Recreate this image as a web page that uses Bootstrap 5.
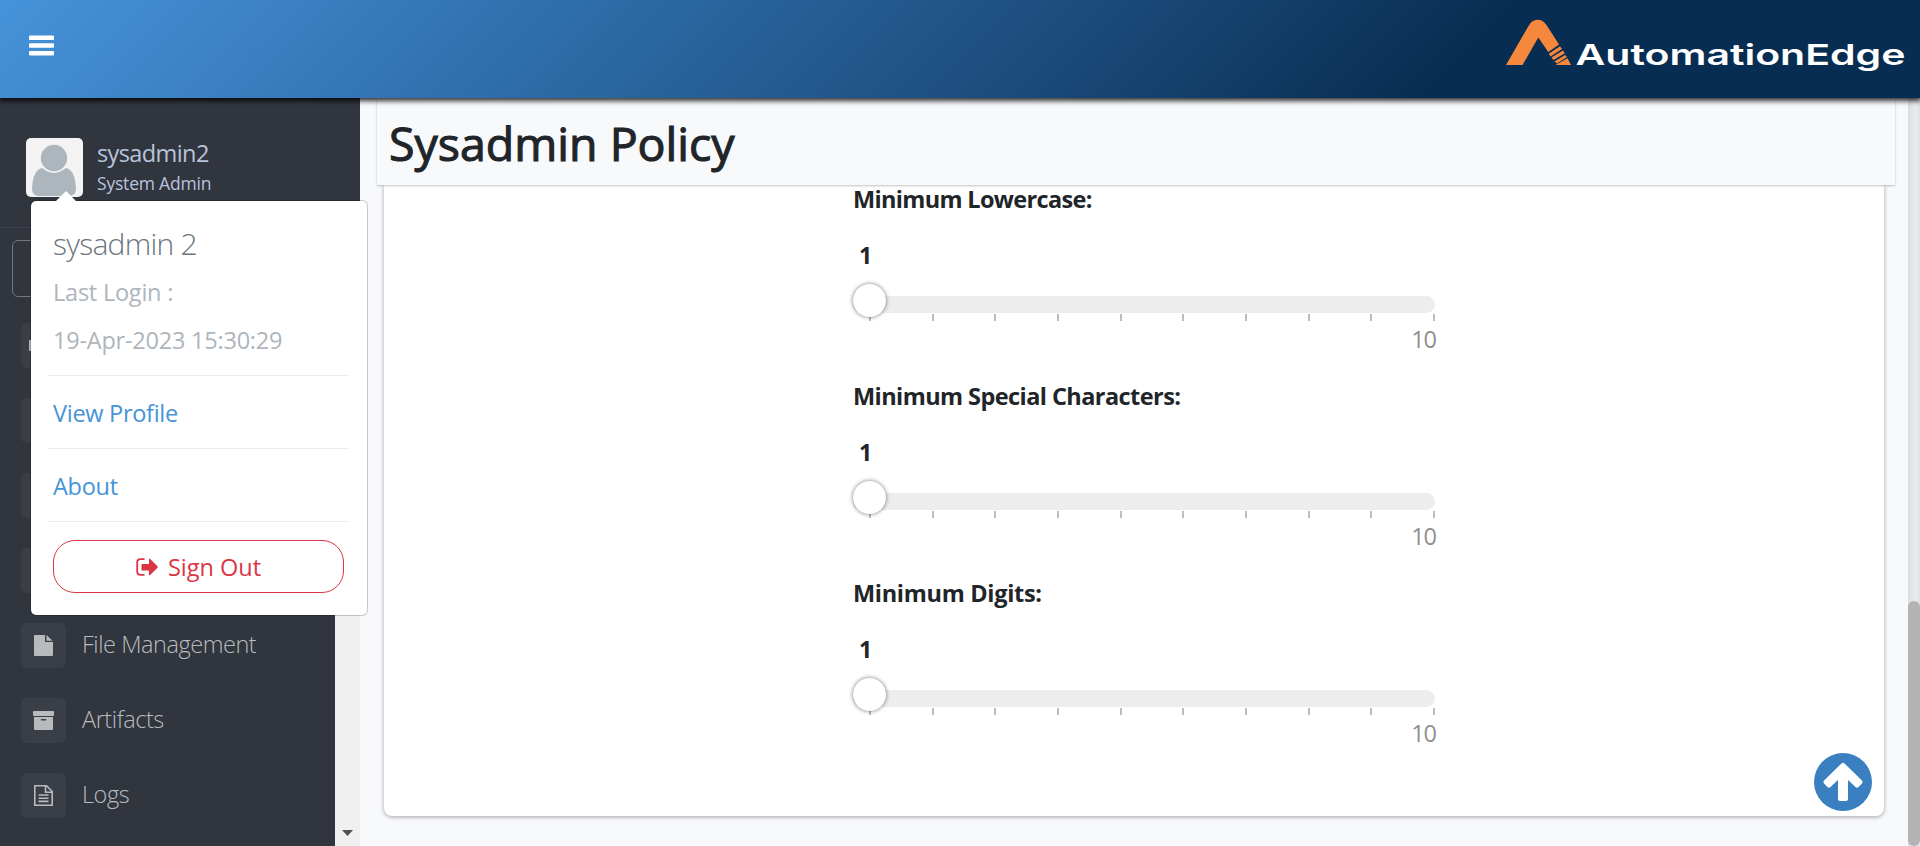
<!DOCTYPE html>
<html lang="en">
<head>
<meta charset="utf-8">
<meta name="viewport" content="width=device-width, initial-scale=1">
<title>Sysadmin Policy - AutomationEdge</title>
<link rel="stylesheet" href="https://cdn.jsdelivr.net/npm/bootstrap@5.3.0/dist/css/bootstrap.min.css">
<style>
  body { font-family: "Open Sans", "Noto Sans", sans-serif; font-size: 23.5px; line-height: 24px; height: 846px; background: #f8f9fb; color: #212529; }
  svg { display: block; flex: none; }

  .topbar { height: 98px; padding: 0 13px 8px 29px; z-index: 20; background: linear-gradient(135deg, #4593d9 0%, #3b80c2 15%, #2f70ae 27%, #23588c 45%, #164471 60%, #082d52 75%, #082d52 100%); box-shadow: 0 2px 5px 1px rgba(0,0,0,.8); }

  .side { width: 360px; background: #31353e; flex: none; z-index: 5; }
  .user-box { height: 130px; padding: 40px 0 0 26px; gap: 14px; border-bottom: 1px solid #3c414c; color: #b8c4dc; }
  .avatar { width: 57px; height: 59px; border-radius: 5px; background: #f3f3f3; }
  .user-name { letter-spacing: -.6px; margin-top: 3px; }
  .user-role { font-size: 17.5px; letter-spacing: -.2px; margin-top: 8px; line-height: 20px; }
  .search-box { height: 57px; margin: 12px 20px 26px 12px; border: 1px solid #72767d; border-radius: 6px; flex: none; }
  .menu-row { height: 45px; margin: 0 0 30px 21px; gap: 16px; flex: none; font-weight: 300; color: #b8bbbf; letter-spacing: -.45px; }
  .menu-icon { width: 45px; height: 45px; border-radius: 6px; background: #3a3e47; color: #b8babd; }
  .menu-row .txt { margin-top: -3px; }
  .side-scroll { width: 25px; background: #f0f0f0; top: 129px; bottom: 0; right: 0; }
  .side-scroll svg { margin-bottom: 10px; }

  .user-pop { left: 30px; top: 102px; width: 338px; height: 416px; padding: 25px 17px 0 17px; background: #fff; border: 1px solid rgba(0,0,0,.2); border-radius: 6px; background-clip: padding-box; z-index: 10; }
  .user-pop .tip { left: 25px; top: -10px; }
  .pop-line { padding-left: 5px; white-space: nowrap; }
  .pop-name { font-weight: 300; font-size: 30px; letter-spacing: -.75px; line-height: 36px; color: #6c757d; }
  .pop-grey { color: #adb5bd; margin-top: 24px; letter-spacing: -.22px; }
  .pop-name + .pop-grey { margin-top: 18px; }
  .pop-rule { height: 1px; margin-right: 1px; background: #e9ecef; }
  .pop-grey + .pop-rule { margin-top: 23px; }
  .pop-item { padding-top: 25px; padding-bottom: 23px; }
  .pop-link { color: #4593d8; text-decoration: none; letter-spacing: -.28px; }
  .sign-out { height: 53px; border-radius: 22px; margin: 18px 6px 0 5px; font-size: 23.5px; line-height: 24px; gap: 10px; padding: 0; }

  .scroll-bar { width: 12px; background: linear-gradient(90deg, #dcdde0, #eaebee 60%, #e0e1e4); }
  .scroll-thumb { height: 245px; border-radius: 6px; background: #b3b3b3; }
  .page-head { margin: 0 13px 0 17px; height: 87px; padding: 22px 0 0 12px; background: #f8f9fb; box-shadow: 0 1px 2px rgba(40,50,70,.3); z-index: 2; flex: none; }
  .page-head h1 { font-size: 46.5px; font-weight: 400; -webkit-text-stroke: 1.1px currentColor; letter-spacing: 0; line-height: 47px; margin: 0; }
  .policy { margin: 0 24px 30px 24px; border-radius: 0 0 8px 8px; background: #fff; box-shadow: 0 1px 4px rgba(0,0,0,.35); padding: 2px 0 0 469px; }

  .range-item { width: 582px; height: 197px; }
  .range-item label { font-weight: 700; white-space: nowrap; display: block; }
  .l1 { letter-spacing: -.66px; } .l2 { letter-spacing: -.57px; } .l3 { letter-spacing: -.3px; }
  .range-val { font-weight: 700; font-size: 23px; padding-left: 6px; margin-top: 32px; }
  .range-track { height: 17px; margin: 29px 0 1px; border-radius: 9px; background: #ededed; }
  .range-knob { width: 33px; height: 33px; left: 0; top: -12px; border-radius: 50%; background: #fff; box-shadow: 0 0 4px rgba(0,0,0,.55); }
  .range-ticks { padding: 0 0 0 16px; }
  .range-ticks i { width: 2px; height: 7px; background: #bdbdbd; }
  .range-max { color: #8f8f8f; margin-top: 6px; letter-spacing: -1px; margin-right: -1px; }
  .to-top { right: 36px; bottom: 35px; z-index: 3; }
</style>
</head>
<body class="d-flex flex-column overflow-hidden">

<header class="topbar d-flex align-items-center position-relative flex-shrink-0">
  <svg width="25" height="21" viewBox="0 0 25 21" fill="#fff"><rect y=".5" width="25" height="4.5" rx="1"/><rect y="8.3" width="25" height="4.5" rx="1"/><rect y="16" width="25" height="4.5" rx="1"/></svg>
  <svg class="ms-auto" width="401" height="60" viewBox="1506 15 401 60">
    <g fill="#f6883d">
      <path d="M1506 65L1528.500 26Q1532 19.700 1537.500 19.700Q1543 19.700 1546.500 25L1559 44.600L1548.300 52L1538.300 37.500L1522.500 65Z"/>
      <path d="M1560 46.300L1562 49L1550.500 56.500L1548.800 53.700Z"/>
      <path d="M1563 50.500L1564.800 53.300L1553.500 60L1551.500 57.500Z"/>
      <path d="M1565.200 55L1567 57L1557 63.500L1554.500 61.600Z"/>
      <path d="M1567.500 58.300L1571 65H1555.500Z"/>
    </g>
    <text x="1575.500" y="64.700" textLength="330" lengthAdjust="spacingAndGlyphs" font-family="Inter, sans-serif" font-weight="600" font-size="29" fill="#fff">AutomationEdge</text>
  </svg>
</header>

<div class="d-flex flex-grow-1 position-relative" style="min-height:0">
  <nav class="side d-flex flex-column position-relative overflow-hidden">
    <div class="user-box d-flex align-items-start flex-shrink-0">
      <div class="avatar flex-shrink-0">
        <svg width="57" height="59" viewBox="0 0 57 59"><path d="M16 30Q28 38 40 30Q49 32 50 50Q50 58 43 58H13Q6 58 6 50Q7 32 16 30Z" fill="#adb5bd"/><circle cx="28" cy="20" r="15" fill="#f3f3f3"/><circle cx="28" cy="20" r="13.200" fill="#adb5bd"/></svg>
      </div>
      <div>
        <div class="user-name">sysadmin2</div>
        <div class="user-role">System Admin</div>
      </div>
    </div>
    <div class="search-box"></div>
    <div class="menu-row d-flex"><span class="menu-icon d-flex align-items-center"><svg width="45" height="22" viewBox="0 0 45 22"><rect x="8" y="5" width="26" height="11" rx="1" fill="currentColor"/></svg></span></div>
    <div class="menu-row d-flex"><span class="menu-icon"></span></div>
    <div class="menu-row d-flex"><span class="menu-icon"></span></div>
    <div class="menu-row d-flex"><span class="menu-icon"></span></div>
    <div class="menu-row d-flex align-items-center">
      <span class="menu-icon d-flex align-items-center justify-content-center"><svg width="19" height="21" viewBox="0 0 19 21" fill="currentColor"><path d="M1 0H11V7H19V20Q19 21 18 21H1Q0 21 0 20V1Q0 0 1 0Z"/><path d="M12.500 0L18.500 5.800H12.500Z"/></svg></span>
      <span class="txt">File Management</span>
    </div>
    <div class="menu-row d-flex align-items-center">
      <span class="menu-icon d-flex align-items-center justify-content-center"><svg width="21" height="19" viewBox="0 0 21 19" fill="currentColor"><rect width="21" height="5" rx="1"/><path fill-rule="evenodd" d="M1 6H20V18Q20 19 19 19H2Q1 19 1 18ZM8.500 8A.8.8 0 0 0 8.500 9.600H12.500A.8.8 0 0 0 12.500 8Z"/></svg></span>
      <span class="txt">Artifacts</span>
    </div>
    <div class="menu-row d-flex align-items-center">
      <span class="menu-icon d-flex align-items-center justify-content-center"><svg width="19" height="21" viewBox="0 0 19 21" fill="none" stroke="currentColor" stroke-width="1.600"><path d="M.8 .8H12.500L18.200 6.500V20.200H.8Z M11.500 .8V7.300H18.200"/><path d="M4.500 10H14.500M4.500 13.200H14.500M4.500 16.400H14.500"/></svg></span>
      <span class="txt">Logs</span>
    </div>
    <div class="side-scroll position-absolute d-flex align-items-end justify-content-center"><svg width="11" height="6" viewBox="0 0 11 6"><path d="M0 0H11L5.500 6Z" fill="#505050"/></svg></div>
  </nav>

  <div class="user-pop position-absolute">
    <svg class="tip position-absolute" width="20" height="10" viewBox="0 0 20 10"><path d="M0 10L10 0L20 10Z" fill="#fff"/></svg>
    <div class="pop-line pop-name">sysadmin 2</div>
    <div class="pop-line pop-grey">Last Login :</div>
    <div class="pop-line pop-grey">19-Apr-2023 15:30:29</div>
    <div class="pop-rule"></div>
    <div class="pop-line pop-item"><a class="pop-link" href="#">View Profile</a></div>
    <div class="pop-rule"></div>
    <div class="pop-line pop-item"><a class="pop-link" href="#">About</a></div>
    <div class="pop-rule"></div>
    <div class="d-grid"><button class="sign-out btn btn-outline-danger d-flex align-items-center justify-content-center" type="button">
      <svg width="22" height="18" viewBox="0 0 22 18"><path d="M8.500 1.200H4.500Q1.200 1.200 1.200 4.500V13.500Q1.200 16.800 4.500 16.800H8.500" fill="none" stroke="currentColor" stroke-width="1.800"/><path d="M6 6H13V1.500Q13 0 14.200 1L21.500 8.300Q22 9 21.500 9.700L14.200 17Q13 18 13 16.500V12.500H6Q5.500 12.500 5.500 12V6.500Q5.500 6 6 6Z" fill="currentColor"/></svg>
      Sign Out
    </button></div>
  </div>

  <main class="d-flex flex-column flex-grow-1 position-relative">
    <div class="page-head position-relative"><h1>Sysadmin Policy</h1></div>
    <section class="policy flex-grow-1">
      <div class="range-item">
        <label class="l1">Minimum Lowercase:</label>
        <div class="range-val">1</div>
        <div class="range-track position-relative"><div class="range-knob position-absolute"></div></div>
        <div class="range-ticks d-flex justify-content-between"><i></i><i></i><i></i><i></i><i></i><i></i><i></i><i></i><i></i><i></i></div>
        <div class="range-max text-end">10</div>
      </div>
      <div class="range-item">
        <label class="l2">Minimum Special Characters:</label>
        <div class="range-val">1</div>
        <div class="range-track position-relative"><div class="range-knob position-absolute"></div></div>
        <div class="range-ticks d-flex justify-content-between"><i></i><i></i><i></i><i></i><i></i><i></i><i></i><i></i><i></i><i></i></div>
        <div class="range-max text-end">10</div>
      </div>
      <div class="range-item">
        <label class="l3">Minimum Digits:</label>
        <div class="range-val">1</div>
        <div class="range-track position-relative"><div class="range-knob position-absolute"></div></div>
        <div class="range-ticks d-flex justify-content-between"><i></i><i></i><i></i><i></i><i></i><i></i><i></i><i></i><i></i><i></i></div>
        <div class="range-max text-end">10</div>
      </div>
    </section>
    <a class="to-top position-absolute" href="#" aria-label="Back to top">
      <svg width="58" height="58" viewBox="0 0 58 58"><circle cx="29" cy="29" r="29" fill="#3a80c0"/><path d="M27.500 10.500Q29 9 30.500 10.500L48 27.500Q49.300 29 48 30.500L44.500 34Q43 35.500 41.500 34L34 27V46Q34 48 32 48H26Q24 48 24 46V27L16.500 34Q15 35.500 13.500 34L10 30.500Q8.700 29 10 27.500Z" fill="#fff"/></svg>
    </a>
  </main>
  <div class="scroll-bar d-flex flex-column justify-content-end flex-shrink-0"><div class="scroll-thumb"></div></div>
</div>

<script src="https://cdn.jsdelivr.net/npm/bootstrap@5.3.0/dist/js/bootstrap.bundle.min.js"></script>
</body>
</html>
